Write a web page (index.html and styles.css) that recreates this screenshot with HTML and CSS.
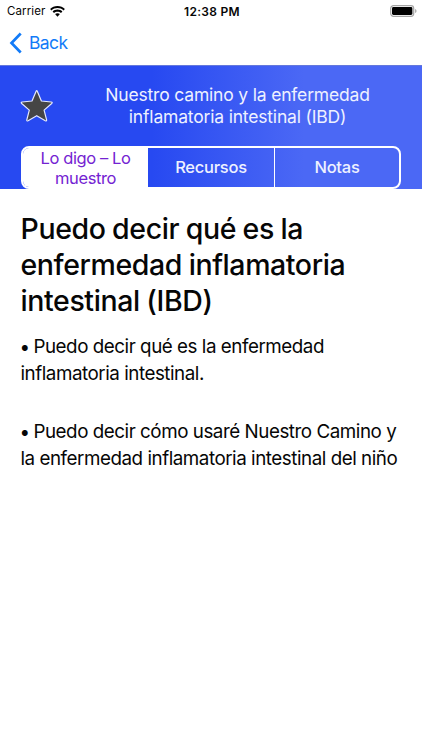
FILE: index.html
```html
<!DOCTYPE html>
<html lang="es">
<head>
  <meta charset="utf-8">
  <title>Nuestro camino</title>
  <link rel="stylesheet" href="styles.css">
</head>

<body>
  <div class="statusBar">
    <div class="carrier">
      <span>Carrier</span>
      <svg class="wifi" viewBox="0 0 15 11" width="15" height="11">
        <path d="M7.5 0C4.6 0 2 1.1.1 2.9l1.4 1.5C3.1 2.9 5.2 2.1 7.5 2.1s4.4.8 6 2.3l1.4-1.5C13 1.1 10.4 0 7.5 0z"/>
        <path d="M7.5 3.6c-1.900 0-3.600.7-4.900 1.900l1.400 1.500c.9-.8 2.100-1.300 3.500-1.300s2.600.5 3.500 1.300l1.400-1.500C11.100 4.300 9.400 3.600 7.500 3.600z"/>
        <path d="M7.500 7.200c-.9 0-1.700.3-2.400.9L7.500 10.700l2.400-2.600c-.7-.6-1.500-.9-2.400-.9z"/>
      </svg>
    </div>
    <div class="clock">12:38 PM</div>
    <svg class="battery" viewBox="0 0 27 12" width="27" height="12">
      <rect x=".7" y=".7" width="23" height="10.600" rx="2.800" fill="#fff" stroke="#a5a5a5" stroke-width="1.200"/>
      <rect x="2" y="2" width="20.400" height="8" rx="1.400"/>
      <path d="M25.100 4v4c.8-.3 1.400-1.100 1.400-2s-.6-1.700-1.400-2z" fill="#a5a5a5"/>
    </svg>
  </div>

  <div class="navBar">
    <svg viewBox="0 0 13 22" width="13" height="22">
      <path d="M11.700 1.500L2.500 11l9.200 9.500" fill="none" stroke="#127bf8" stroke-width="2.700"/>
    </svg>
    <span>Back</span>
  </div>

  <div class="header">
    <div class="titleRow">
      <svg class="star" viewBox="0 0 34 34" width="34" height="34">
        <path d="M16 2.400q.7-1.500 1.400 0l4 9.600 9.800 1q1.700.3.500 1.500l-7.600 6.600 2.500 9.700q.2 1.700-1.300.9l-8.600-5-8.600 5q-1.500.8-1.300-.9l2.500-9.700-7.600-6.600q-1.200-1.200.5-1.500l9.800-1z" fill="#454545" stroke="#e4e8ff" stroke-width="1.200" stroke-linejoin="round"/>
      </svg>
      <div class="title">Nuestro camino y la enfermedad<br>inflamatoria intestinal (IBD)</div>
    </div>
    <div class="tabs">
      <div class="tab active">Lo digo – Lo<br>muestro</div>
      <div class="tab">Recursos</div>
      <div class="tab">Notas</div>
    </div>
  </div>

  <div class="content">
    <h1>Puedo decir qué es la<br>enfermedad inflamatoria<br>intestinal (IBD)</h1>
    <p><span class="bullet">•</span> Puedo decir qué es la enfermedad<br>inflamatoria intestinal.</p>
    <p><span class="bullet">•</span> Puedo decir cómo usaré Nuestro Camino y<br>la enfermedad inflamatoria intestinal del niño</p>
  </div>
</body>
</html>
```
FILE: styles.css
```css
html, body { margin: 0; padding: 0; }

body
{
    background: white;
    color: #060606;
    font-family: Inter, "Liberation Sans", sans-serif;
    overflow: hidden;
}

svg { display: block; }

.statusBar
{
    display: grid;
    grid-template-columns: 1fr auto 1fr;
    align-items: center;
    height: 22px;
    padding: 0 5px 0 7px;
    font-size: 11.5px;
}

.carrier
{
    display: flex;
    align-items: center;
    gap: 5px;
    letter-spacing: 0.1px;
}

.clock { font-size: 12px; font-weight: 600; letter-spacing: 0.3px; }

.battery { justify-self: end; }

.navBar
{
    display: flex;
    align-items: center;
    gap: 7px;
    height: 41px;
    padding: 0 0 2px 9px;
    color: #127bf8;
    font-size: 17.5px;
    letter-spacing: -0.6px;
}

.header
{
    box-sizing: border-box;
    height: 124px;
    background: linear-gradient(90deg, #2749f1 36%, #4b68f5 72%);
    border-top: 1px solid #6478dc;
    color: #eef1ff;
}

.titleRow
{
    display: flex;
    height: 80px;
}

.star { margin: 23px 0 0 20px; }

.title
{
    flex: 1;
    padding: 18px 0 0 20px;
    margin-right: 21px;
    font-size: 17.5px;
    letter-spacing: -0.18px;
    line-height: 22px;
    text-align: center;
}

.tabs
{
    display: grid;
    grid-template-columns: 125px 126px 1fr;
    box-sizing: border-box;
    width: 380px;
    height: 43px;
    margin-left: 21px;
    border: 2px solid white;
    border-radius: 8px;
    overflow: hidden;
}

.tab
{
    display: flex;
    align-items: center;
    justify-content: center;
    font-size: 16.5px;
    font-weight: 500;
    letter-spacing: -0.25px;
    line-height: 19.5px;
    text-align: center;
}

.tab + .tab + .tab { border-left: 1px solid white; }

.active
{
    padding-top: 1px;
    background: white;
    color: #7423d2;
    font-weight: 400;
    letter-spacing: -0.4px;
}

.content { padding: 22px 0 0 20.5px; white-space: nowrap; }

h1
{
    margin: 0 0 14px;
    font-size: 28.5px;
    font-weight: 500;
    letter-spacing: -0.4px;
    word-spacing: -0.6px;
    line-height: 36px;
}

p
{
    margin: 0 0 31px;
    font-size: 18.8px;
    letter-spacing: -0.46px;
    line-height: 27px;
}

.bullet { margin: 0 -1px; }
```
